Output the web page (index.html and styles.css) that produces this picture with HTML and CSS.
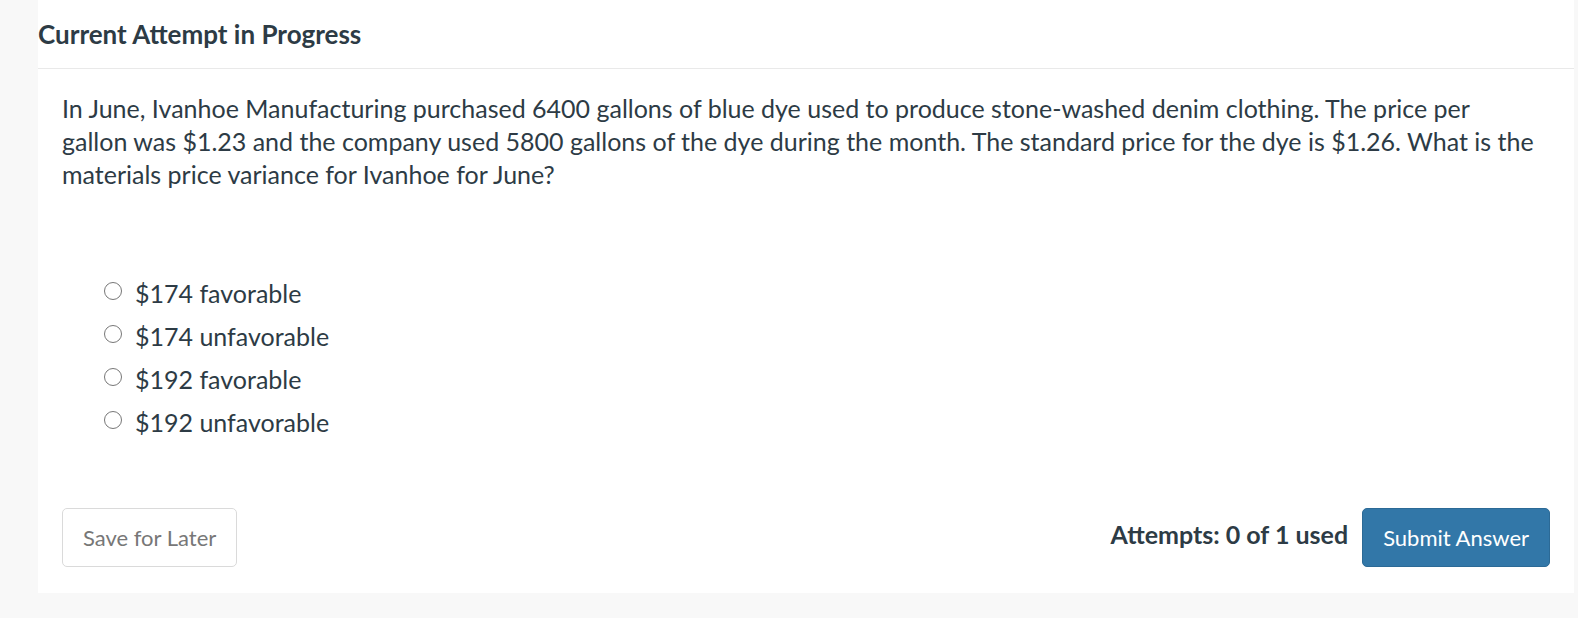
FILE: index.html
```html
<!DOCTYPE html>
<html lang="en">
<head>
<meta charset="UTF-8" />
<meta name="viewport" content="width=device-width, initial-scale=1" />
<title>Current Attempt in Progress</title>
<link rel="stylesheet" href="styles.css">
</head>
<body>
  <div class="card">
    <div class="card-header">Current Attempt in Progress</div>

    <div class="card-body">
      <p class="question">
        In June, Ivanhoe Manufacturing purchased 6400 gallons of blue dye used to produce stone-washed denim clothing. The price per gallon was $1.23 and the company used 5800 gallons of the dye during the month. The standard price for the dye is $1.26. What is the materials price variance for Ivanhoe for June?
      </p>

      <ul class="choices">
        <li class="choice"><span class="radio"></span>$174 favorable</li>
        <li class="choice"><span class="radio"></span>$174 unfavorable</li>
        <li class="choice"><span class="radio"></span>$192 favorable</li>
        <li class="choice"><span class="radio"></span>$192 unfavorable</li>
      </ul>
    </div>

    <div class="card-footer">
      <button class="btn btn-default">Save for Later</button>
      <div class="footer-right">
        <span class="attempts">Attempts: 0 of 1 used</span>
        <button class="btn btn-primary">Submit Answer</button>
      </div>
    </div>
  </div>
</body>
</html>
```

FILE: styles.css
```css
* {
  margin: 0;
  padding: 0;
  box-sizing: border-box;
}

body {
  background-color: #f8f8f8;
  color: #2d3b45;
  font-family: Lato, "Open Sans", Arial, sans-serif;
}

.card {
  margin-left: 38px;
  width: 1536px;
  height: 593px;
  background: #fff;
  display: flex;
  flex-direction: column;
}

.card-header {
  height: 69px;
  display: flex;
  align-items: center;
  border-bottom: 1px solid #e9e9e9;
  font-size: 26px;
  font-weight: bold;
  padding-bottom: 1px;
}

.card-body {
  flex: 1;
  padding: 23px 40px 0 24px;
}

.question {
  font-size: 25px;
  line-height: 33px;
}

.choices {
  list-style: none;
  margin-top: 80px;
  padding-left: 42px;
}

.choice {
  display: flex;
  align-items: center;
  height: 43px;
  font-size: 25px;
}

.radio {
  width: 18px;
  height: 18px;
  border: 1.5px solid #777;
  border-radius: 50%;
  margin-right: 13px;
  margin-top: -3px;
}

.card-footer {
  display: flex;
  justify-content: space-between;
  align-items: center;
  padding: 0 24px 26px 24px;
}

.footer-right {
  display: flex;
  align-items: center;
  gap: 14px;
}

.attempts {
  font-size: 25px;
  font-weight: bold;
  margin-top: -8px;
}

.btn {
  height: 59px;
  font-family: inherit;
  font-size: 22px;
  border-radius: 5px;
  padding: 0 20px;
  cursor: pointer;
}

.btn-default {
  background: #fff;
  color: #777;
  border: 1px solid #dadada;
}

.btn-primary {
  background: #3277a8;
  color: #fff;
  border: 1px solid #2c6a96;
}
```
